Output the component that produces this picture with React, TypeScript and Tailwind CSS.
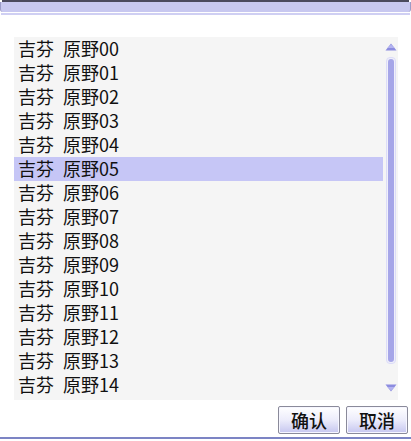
const names = Array.from({ length: 15 }, (_, i) => String(i).padStart(2, '0'));

function ScrollArrow({ down }: { down?: boolean }) {
  return (
    <svg width="12" height="8" viewBox="0 0 12 8" className={down ? 'rotate-180' : ''}>
      <polygon points="6,0.5 11.5,7.5 0.5,7.5" fill="#8c8ce0" />
      <polygon points="6,1.5 9.5,5 2.5,5" fill="#b4b4f0" />
    </svg>
  );
}

function DialogButton({ label }: { label: string }) {
  return (
    <button
      type="button"
      className="w-[62px] h-[28px] border border-[#8a8a9a] rounded-[2px] bg-gradient-to-b from-[#ffffff] via-[#ececfb] to-[#c6c6ef] text-[18px] font-medium leading-none text-[#111] shadow-[inset_0_0_0_1px_#f6f6ff]"
    >
      {label}
    </button>
  );
}

export default function App() {
  const selected = 5;

  return (
    <div
      className="w-[411px] h-[441px] bg-white flex flex-col overflow-hidden"
      style={{ fontFamily: '"Noto Sans CJK SC", "Liberation Sans", sans-serif' }}
    >
      {/* title strip */}
      <div className="h-[15px] flex flex-col">
        <div className="h-[2px] bg-[#4b4a5e] mx-[2px]" />
        <div className="h-[10px] bg-[#c8c8f0] border-x border-[#9c9cc8] rounded-b-[3px]" />
        <div className="h-[1px] bg-white" />
        <div className="h-[2px] bg-[#cfcff3] mx-[1px]" />
      </div>

      <div className="h-[22px]" />

      {/* list */}
      <div className="ml-[14px] w-[384px] h-[363px] bg-[#f5f5f5] flex">
        <div className="flex-1 flex flex-col">
          {names.map((n, i) => (
            <div
              key={n}
              className={`h-[24px] flex items-center pl-[4px] pb-[3px] text-[18px] leading-none text-[#111] ${
                i === selected ? 'bg-[#c6c6f6]' : ''
              }`}
            >
              <span>吉芬</span>
              <span className="ml-[9px]">原野{n}</span>
            </div>
          ))}
        </div>
        <div className="w-[15px] flex flex-col items-center pt-[6px] pb-[8px]">
          <ScrollArrow />
          <div className="flex-1 w-[10px] mt-[6px] mb-[20px] rounded-[4px] border border-[#dcdcf8] bg-[#f0f0fa] flex justify-center py-[1px]">
            <div className="w-[6px] rounded-[3px] bg-[#a6a6e8]" />
          </div>
          <ScrollArrow down />
        </div>
      </div>

      {/* buttons */}
      <div className="flex justify-end gap-[6px] pr-[3px] mt-[6px]">
        <DialogButton label="确认" />
        <DialogButton label="取消" />
      </div>

      <div className="mt-[3px] h-[2px] bg-[#7c84c4]" />
    </div>
  );
}
